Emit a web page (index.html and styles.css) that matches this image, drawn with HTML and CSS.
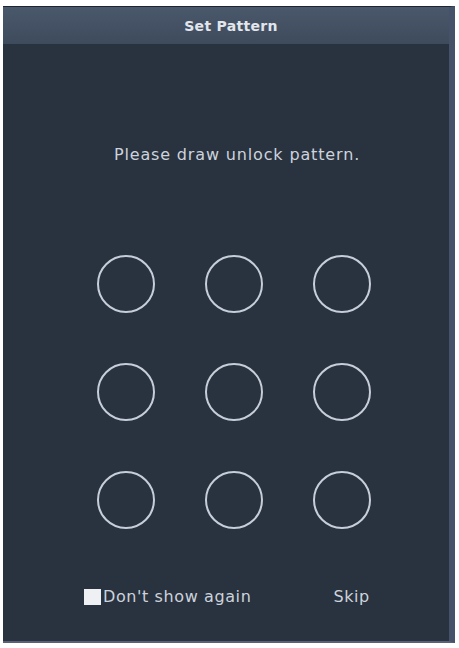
FILE: index.html
```html
<!DOCTYPE html>
<html>
<head>
<meta charset="utf-8">
<link rel="stylesheet" href="styles.css">
</head>
<body>
<div class="dialog">
  <div class="header">Set Pattern</div>
  <div class="body">
    <div class="prompt">Please draw unlock pattern.</div>
    <div class="grid">
      <span class="dot"></span><span class="dot"></span><span class="dot"></span>
      <span class="dot"></span><span class="dot"></span><span class="dot"></span>
      <span class="dot"></span><span class="dot"></span><span class="dot"></span>
    </div>
    <div class="footer">
      <label class="check"><span class="box"></span>Don't show again</label>
      <span class="skip">Skip</span>
    </div>
  </div>
</div>
</body>
</html>
```
FILE: styles.css
```css
html, body {
  margin: 0;
  padding: 0;
  background: #ffffff;
}
body {
  padding: 6px 4px 5px 3px;
  height: 648px;
  box-sizing: border-box;
  font-family: "DejaVu Sans", Verdana, sans-serif;
}
.dialog {
  height: 100%;
  display: flex;
  flex-direction: column;
  background: #29323f;
  border-top: 1px solid #1e2430;
  border-right: 6px solid #46526a;
  border-bottom: 2px solid #5a6078;
  box-sizing: border-box;
}
.header {
  height: 37px;
  flex: none;
  display: flex;
  align-items: center;
  justify-content: center;
  background: linear-gradient(#4a586b, #3e4b5d);
  color: #e2e6ec;
  font-weight: bold;
  font-size: 14px;
  letter-spacing: 0.3px;
  padding-left: 10px;
}
.body {
  flex: 1;
  display: flex;
  flex-direction: column;
  align-items: center;
}
.prompt {
  margin-top: 101px;
  line-height: 20px;
  color: #cdd3dc;
  font-size: 16px;
  letter-spacing: 0.85px;
  margin-left: 22px;
}
.grid {
  margin-top: 90px;
  display: grid;
  grid-template-columns: repeat(3, 58px);
  grid-auto-rows: 58px;
  column-gap: 50px;
  row-gap: 50px;
  margin-left: 16px;
}
.dot {
  border: 2px solid #c6ced9;
  border-radius: 50%;
  box-sizing: border-box;
}
.footer {
  margin-top: 58px;
  line-height: 20px;
  width: 100%;
  display: flex;
  align-items: center;
  color: #cdd3dc;
  font-size: 16px;
  letter-spacing: 0.6px;
}
.check {
  display: flex;
  align-items: center;
  margin-left: 81px;
}
.box {
  width: 17px;
  height: 16px;
  background: #eef0f4;
  margin-right: 2px;
}
.skip {
  margin-left: 82px;
}
```
